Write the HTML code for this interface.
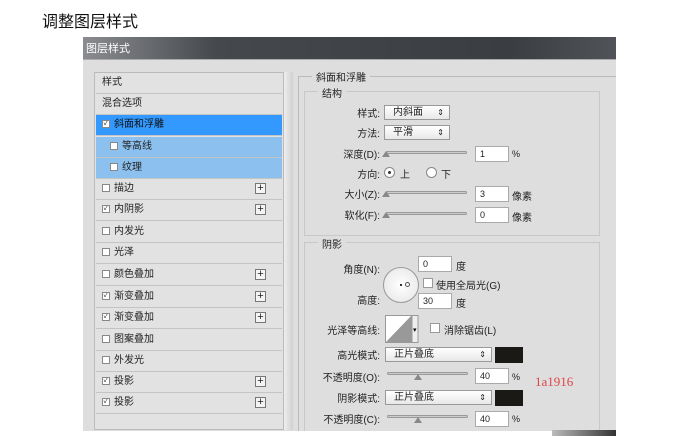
<!DOCTYPE html>
<html><head><meta charset="utf-8"><style>
*{margin:0;padding:0;box-sizing:border-box}
body{width:690px;height:436px;background:#fff;position:relative;overflow:hidden;font-family:"Liberation Sans","Noto Sans CJK SC",sans-serif;font-size:10px;color:#222}
.a{position:absolute;white-space:nowrap}
.row{position:absolute;left:96px;width:186px;height:21px;border-bottom:1px solid #c4c4c4;background:#e2e2e2;line-height:20px;padding-left:6px;font-size:10px}
.cb{display:inline-block;width:8px;height:8px;border:1px solid #888;background:#fff;margin-right:4px;vertical-align:-1px;font-size:7px;line-height:6px;text-align:center;overflow:hidden}
.plus{position:absolute;right:16px;top:4px;width:11px;height:11px;border:1px solid #777;background:#f4f4f4;font-size:11px;line-height:8px;text-align:center}
.lbl{position:absolute;text-align:right;width:80px;font-size:10px;margin-top:-2px}
.dd{position:absolute;height:15px;border:1px solid #999;background:linear-gradient(#fff,#e8e8e8);font-size:10px;line-height:13px;padding-left:8px}
.dd:after{content:"⇕";position:absolute;right:5px;top:0;font-size:8px}
.in{position:absolute;width:34px;height:16px;border:1px solid #aaa;background:#fff;font-size:9px;line-height:14px;padding-left:4px}
.sl{position:absolute;height:3px;border:1px solid #999;background:#ccc;border-radius:2px}
.th{position:absolute;width:0;height:0;border-left:4px solid transparent;border-right:4px solid transparent;border-bottom:6px solid #888}
</style></head><body>
<div class="a" style="left:42px;top:8px;font-size:16px;color:#111">调整图层样式</div>
<div class="a" style="left:83px;top:37px;width:533px;height:22px;background:linear-gradient(90deg,#8a8c90 0%,#45484d 25%,#3a3d42 80%,#505358 100%)"></div>
<div class="a" style="left:86px;top:40px;font-size:11px;color:#fff">图层样式</div>
<div class="a" style="left:83px;top:59px;width:533px;height:372px;background:#dedede;border-top:1px solid #aaa"></div>
<div class="a" style="left:94px;top:72px;width:190px;height:358px;background:#e2e2e2;border:1px solid #bbb"></div>
<div class="a" style="left:284px;top:72px;width:9px;height:358px;background:linear-gradient(90deg,#eee,#d0d0d0)"></div>
<div class="row" style="top:73px">样式</div>
<div class="row" style="top:94px">混合选项</div>
<div class="row" style="top:115px;background:#3399ff;color:#111"><span class="cb">✓</span>斜面和浮雕</div>
<div class="row" style="top:137px;background:#8cc0ef;padding-left:14px"><span class="cb"></span>等高线</div>
<div class="row" style="top:158px;background:#8cc0ef;padding-left:14px"><span class="cb"></span>纹理</div>
<div class="row" style="top:179px"><span class="cb"></span>描边<span class="plus">+</span></div>
<div class="row" style="top:200px"><span class="cb">✓</span>内阴影<span class="plus">+</span></div>
<div class="row" style="top:222px"><span class="cb"></span>内发光</div>
<div class="row" style="top:243px"><span class="cb"></span>光泽</div>
<div class="row" style="top:265px"><span class="cb"></span>颜色叠加<span class="plus">+</span></div>
<div class="row" style="top:287px"><span class="cb">✓</span>渐变叠加<span class="plus">+</span></div>
<div class="row" style="top:308px"><span class="cb">✓</span>渐变叠加<span class="plus">+</span></div>
<div class="row" style="top:330px"><span class="cb"></span>图案叠加</div>
<div class="row" style="top:351px"><span class="cb"></span>外发光</div>
<div class="row" style="top:372px"><span class="cb">✓</span>投影<span class="plus">+</span></div>
<div class="row" style="top:393px"><span class="cb">✓</span>投影<span class="plus">+</span></div>
<div class="a" style="left:298px;top:76px;width:318px;height:355px;border-left:1px solid #bbb;border-top:1px solid #bbb"></div>
<div class="a" style="left:312px;top:69px;background:#dedede;padding:0 4px">斜面和浮雕</div>
<div class="a" style="left:304px;top:91px;width:296px;height:145px;border:1px solid #c8c8c8"></div>
<div class="a" style="left:318px;top:85px;background:#dedede;padding:0 4px">结构</div>
<div class="lbl" style="left:300px;top:107px">样式:</div>
<div class="dd" style="left:384px;top:105px;width:66px">内斜面</div>
<div class="lbl" style="left:300px;top:127px">方法:</div>
<div class="dd" style="left:384px;top:125px;width:66px">平滑</div>
<div class="lbl" style="left:300px;top:148px">深度(D):</div>
<div class="sl" style="left:386px;top:151px;width:81px"></div><div class="th" style="left:382px;top:151px"></div>
<div class="in" style="left:475px;top:146px">1</div><div class="a" style="left:512px;top:149px;font-size:9px">%</div>
<div class="lbl" style="left:300px;top:168px">方向:</div>
<div class="a" style="left:384px;top:167px;width:11px;height:11px;border:1px solid #888;border-radius:50%;background:#fff"></div>
<div class="a" style="left:388px;top:171px;width:3px;height:3px;border-radius:50%;background:#333"></div>
<div class="a" style="left:400px;top:166px">上</div>
<div class="a" style="left:426px;top:167px;width:11px;height:11px;border:1px solid #888;border-radius:50%;background:#fff"></div>
<div class="a" style="left:441px;top:166px">下</div>
<div class="lbl" style="left:300px;top:188px">大小(Z):</div>
<div class="sl" style="left:386px;top:191px;width:81px"></div><div class="th" style="left:382px;top:191px"></div>
<div class="in" style="left:475px;top:186px">3</div><div class="a" style="left:512px;top:188px">像素</div>
<div class="lbl" style="left:300px;top:209px">软化(F):</div>
<div class="sl" style="left:386px;top:212px;width:81px"></div><div class="th" style="left:382px;top:212px"></div>
<div class="in" style="left:475px;top:207px">0</div><div class="a" style="left:512px;top:209px">像素</div>
<div class="a" style="left:304px;top:242px;width:296px;height:190px;border:1px solid #c8c8c8"></div>
<div class="a" style="left:318px;top:236px;background:#dedede;padding:0 4px">阴影</div>
<div class="lbl" style="left:300px;top:263px">角度(N):</div>
<div class="a" style="left:383px;top:267px;width:36px;height:36px;border:1px solid #999;border-radius:50%;background:radial-gradient(#fff,#e4e4e4)"></div>
<div class="a" style="left:400px;top:284px;width:2px;height:2px;background:#333"></div>
<div class="a" style="left:405px;top:282px;width:5px;height:5px;border:1px solid #555;border-radius:50%"></div>
<div class="in" style="left:418px;top:256px">0</div><div class="a" style="left:456px;top:258px">度</div>
<div class="a" style="left:423px;top:278px;width:10px;height:10px;border:1px solid #999;background:#fff"></div>
<div class="a" style="left:436px;top:277px">使用全局光(G)</div>
<div class="lbl" style="left:300px;top:294px">高度:</div>
<div class="in" style="left:418px;top:293px">30</div><div class="a" style="left:456px;top:295px">度</div>
<div class="lbl" style="left:300px;top:324px">光泽等高线:</div>
<svg class="a" style="left:385px;top:315px" width="34" height="28"><rect x="0.5" y="0.5" width="26" height="27" fill="#fff" stroke="#999"/><polygon points="1,27 26,1 26,27" fill="#999"/><rect x="27" y="0.5" width="6" height="27" fill="#eee" stroke="#999"/><text x="28" y="17" font-size="7">▾</text></svg>
<div class="a" style="left:430px;top:323px;width:10px;height:10px;border:1px solid #999;background:#fff"></div>
<div class="a" style="left:444px;top:322px">消除锯齿(L)</div>
<div class="lbl" style="left:300px;top:349px">高光模式:</div>
<div class="dd" style="left:385px;top:347px;width:107px">正片叠底</div>
<div class="a" style="left:495px;top:347px;width:28px;height:16px;background:#1a1916"></div>
<div class="lbl" style="left:300px;top:371px">不透明度(O):</div>
<div class="sl" style="left:387px;top:372px;width:81px"></div><div class="th" style="left:414px;top:374px"></div>
<div class="in" style="left:475px;top:368px">40</div><div class="a" style="left:512px;top:372px;font-size:9px">%</div>
<div class="a" style="left:535px;top:374px;font-family:'Liberation Serif',serif;font-size:13px;color:#e04545">1a1916</div>
<div class="lbl" style="left:300px;top:392px">阴影模式:</div>
<div class="dd" style="left:385px;top:390px;width:107px">正片叠底</div>
<div class="a" style="left:495px;top:390px;width:28px;height:16px;background:#1a1916"></div>
<div class="lbl" style="left:300px;top:413px">不透明度(C):</div>
<div class="sl" style="left:387px;top:415px;width:81px"></div><div class="th" style="left:414px;top:417px"></div>
<div class="in" style="left:475px;top:411px">40</div><div class="a" style="left:512px;top:414px;font-size:9px">%</div>
<div class="a" style="left:83px;top:431px;width:607px;height:5px;background:#fff"></div>
<div class="a" style="left:552px;top:430px;width:64px;height:6px;background:linear-gradient(90deg,#bbb,#333)"></div>
</body></html>
